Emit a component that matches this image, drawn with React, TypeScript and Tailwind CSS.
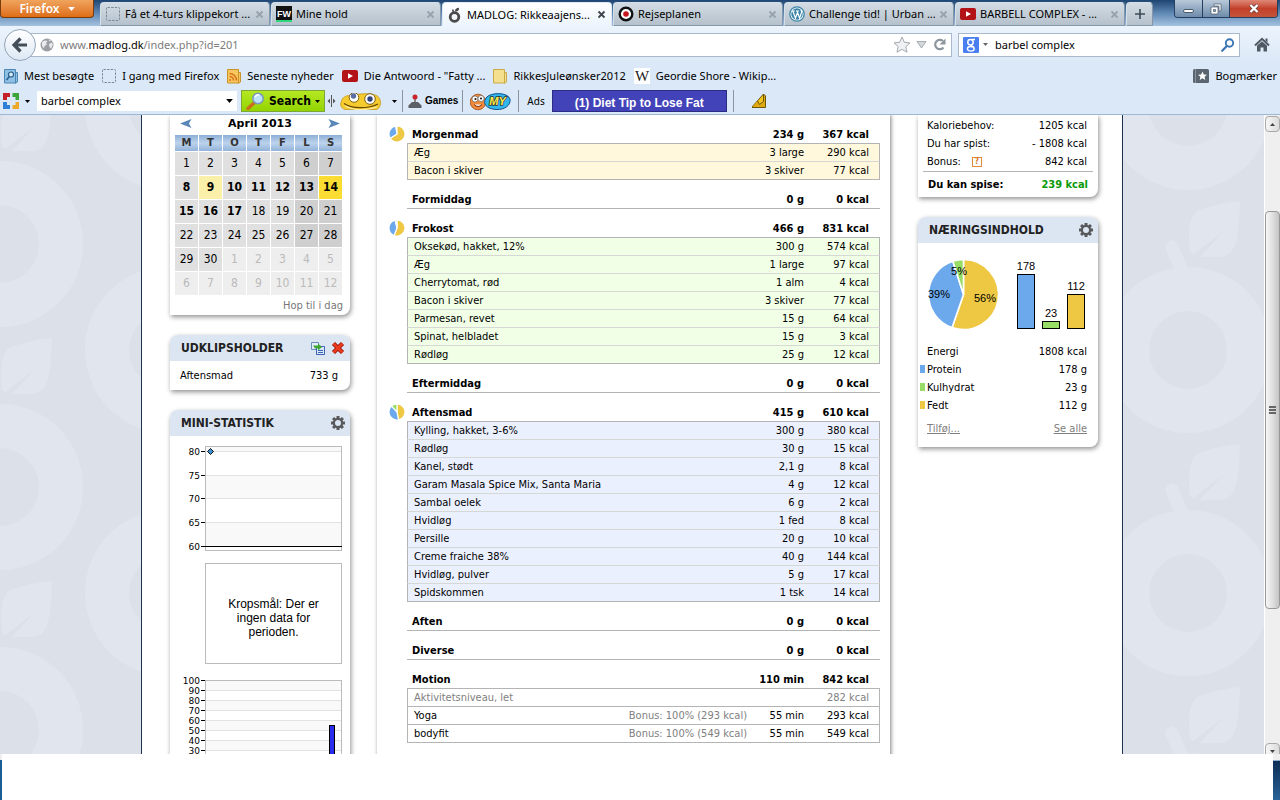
import type { ReactNode } from "react";

type Item = { name: string; amount: string; kcal: string; bonus?: string; muted?: boolean };
type Meal = { title: string; amount: string; kcal: string; tone: string; pie?: number; items: Item[] };

const row = (name: string, amount: string, kcal: string): Item => ({ name, amount, kcal });

const meals: Meal[] = [
  {
    title: "Morgenmad", amount: "234 g", kcal: "367 kcal", tone: "bg-[#fff8dc]", pie: 0.66,
    items: [row("Æg", "3 large", "290 kcal"), row("Bacon i skiver", "3 skiver", "77 kcal")],
  },
  { title: "Formiddag", amount: "0 g", kcal: "0 kcal", tone: "", items: [] },
  {
    title: "Frokost", amount: "466 g", kcal: "831 kcal", tone: "bg-[#f0ffe6]", pie: 0.56,
    items: [
      row("Oksekød, hakket, 12%", "300 g", "574 kcal"),
      row("Æg", "1 large", "97 kcal"),
      row("Cherrytomat, rød", "1 alm", "4 kcal"),
      row("Bacon i skiver", "3 skiver", "77 kcal"),
      row("Parmesan, revet", "15 g", "64 kcal"),
      row("Spinat, helbladet", "15 g", "3 kcal"),
      row("Rødløg", "25 g", "12 kcal"),
    ],
  },
  { title: "Eftermiddag", amount: "0 g", kcal: "0 kcal", tone: "", items: [] },
  {
    title: "Aftensmad", amount: "415 g", kcal: "610 kcal", tone: "bg-[#ebf0ff]", pie: 0.47,
    items: [
      row("Kylling, hakket, 3-6%", "300 g", "380 kcal"),
      row("Rødløg", "30 g", "15 kcal"),
      row("Kanel, stødt", "2,1 g", "8 kcal"),
      row("Garam Masala Spice Mix, Santa Maria", "4 g", "12 kcal"),
      row("Sambal oelek", "6 g", "2 kcal"),
      row("Hvidløg", "1 fed", "8 kcal"),
      row("Persille", "20 g", "10 kcal"),
      row("Creme fraiche 38%", "40 g", "144 kcal"),
      row("Hvidløg, pulver", "5 g", "17 kcal"),
      row("Spidskommen", "1 tsk", "14 kcal"),
    ],
  },
  { title: "Aften", amount: "0 g", kcal: "0 kcal", tone: "", items: [] },
  { title: "Diverse", amount: "0 g", kcal: "0 kcal", tone: "", items: [] },
  {
    title: "Motion", amount: "110 min", kcal: "842 kcal", tone: "bg-white",
    items: [
      { name: "Aktivitetsniveau, let", amount: "", kcal: "282 kcal", muted: true },
      { name: "Yoga", amount: "55 min", kcal: "293 kcal", bonus: "Bonus: 100% (293 kcal)" },
      { name: "bodyfit", amount: "55 min", kcal: "549 kcal", bonus: "Bonus: 100% (549 kcal)" },
    ],
  },
];

const weeks = [
  [1, 2, 3, 4, 5, 6, 7],
  [8, 9, 10, 11, 12, 13, 14],
  [15, 16, 17, 18, 19, 20, 21],
  [22, 23, 24, 25, 26, 27, 28],
  [29, 30, -1, -2, -3, -4, -5],
  [-6, -7, -8, -9, -10, -11, -12],
];

function dayClass(day: number, col: number) {
  if (day < 0) return "bg-[#eeeeee] text-[#bbbbbb]";
  if (day === 14) return "bg-[#fadc32] font-bold";
  if (day === 9) return "bg-[#fbf0aa] font-bold";
  const bg = col > 4 ? "bg-[#cfcfcf]" : "bg-[#e0e0e0]";
  return day >= 8 && day <= 17 ? `${bg} font-bold` : bg;
}

function point(cx: number, cy: number, r: number, t: number) {
  const a = t * Math.PI * 2;
  return `${cx + r * Math.sin(a)} ${cy - r * Math.cos(a)}`;
}

function Slice({ cx, cy, r, from, to, fill }: { cx: number; cy: number; r: number; from: number; to: number; fill: string }) {
  const large = to - from > 0.5 ? 1 : 0;
  return (
    <path
      d={`M${cx} ${cy} L${point(cx, cy, r, from)} A${r} ${r} 0 ${large} 1 ${point(cx, cy, r, to)} Z`}
      fill={fill}
      stroke="#fff"
      strokeWidth={r > 20 ? 1.6 : 1.2}
    />
  );
}

/* ---------- icons ---------- */

function DashedPage() {
  return (
    <svg width="14" height="14" viewBox="0 0 14 14">
      <rect x="0.5" y="0.5" width="13" height="13" rx="1" fill="none" stroke="#7b8794" strokeDasharray="2.4 1.2" />
    </svg>
  );
}

function YouTube() {
  return (
    <svg width="16" height="16" viewBox="0 0 16 16">
      <rect y="2" width="16" height="12" rx="2" fill="#b31217" />
      <path d="M6 5.2 11 8 6 10.8Z" fill="#fff" />
    </svg>
  );
}

function FwIcon() {
  return (
    <svg width="16" height="16" viewBox="0 0 16 16">
      <rect width="16" height="14" fill="#111" />
      <rect y="14" width="16" height="2" fill="#2fd67b" />
      <text x="8" y="11" fontSize="9" fontWeight="900" fill="#fff" textAnchor="middle" fontFamily="Liberation Sans">FW</text>
    </svg>
  );
}

function AppleRing() {
  return (
    <svg width="16" height="16" viewBox="0 0 16 16">
      <circle cx="7.5" cy="10" r="4.3" fill="none" stroke="#4a4a4a" strokeWidth="2.8" />
      <path d="M6.6 5.5 5.6 2.6" stroke="#4a4a4a" strokeWidth="1.6" />
      <path d="M8 4.5C7.8 2 9.5.8 12 .8 12.2 3.4 11 4.8 8 4.5Z" fill="#4a4a4a" />
    </svg>
  );
}

function Target() {
  return (
    <svg width="16" height="16" viewBox="0 0 16 16">
      <circle cx="8" cy="8" r="6.3" fill="#fff" stroke="#111" strokeWidth="2.4" />
      <circle cx="8" cy="8" r="2.8" fill="#c8171e" />
    </svg>
  );
}

function WordPress() {
  return (
    <svg width="16" height="16" viewBox="0 0 16 16">
      <circle cx="8" cy="8" r="7.2" fill="#f4f8fa" stroke="#3c85a8" strokeWidth="1.3" />
      <circle cx="8" cy="8" r="5.7" fill="#3c85a8" />
      <path d="M2.8 5h3M3.8 5 6.5 12 8.2 7.2M7 5h3M8 5l2.6 7 2-5.6c.3-1-.3-1.6-.8-2.2" fill="none" stroke="#fff" strokeWidth="1.2" />
    </svg>
  );
}

function Globe() {
  return (
    <svg width="14" height="14" viewBox="0 0 14 14">
      <circle cx="7" cy="7" r="6.5" fill="#9b9fa3" />
      <path d="M2 4 5 2.5 7.5 3 6 5 7 6.5 4.5 8 4 10.5 2 8ZM9 6l3-1.5.8 2.5-1.8 3.5L9.5 9ZM8.5 1.5l2.5 1-1.5 1Z" fill="#e9ebed" />
    </svg>
  );
}

function Gear() {
  const teeth = [0, 45, 90, 135, 180, 225, 270, 315];
  return (
    <svg width="14" height="14" viewBox="0 0 14 14">
      {teeth.map((a) => (
        <rect key={a} x="5.5" y="0" width="3" height="3.5" fill="#58595b" transform={`rotate(${a} 7 7)`} />
      ))}
      <circle cx="7" cy="7" r="4.1" fill="none" stroke="#58595b" strokeWidth="2.2" />
    </svg>
  );
}

function Magnifier({ color }: { color: string }) {
  return (
    <svg width="14" height="14" viewBox="0 0 14 14">
      <circle cx="8.5" cy="5" r="3.7" fill="none" stroke={color} strokeWidth="1.9" />
      <path d="M5.8 8 1.2 12.8" stroke={color} strokeWidth="2.2" strokeLinecap="round" />
    </svg>
  );
}

function Folder({ children, fill, stroke }: { children?: ReactNode; fill: string; stroke: string }) {
  return (
    <svg width="14" height="16" viewBox="0 0 14 16">
      <path d="M11 4.5h2.5v9.5l-2 1.2H11Z" fill={fill} stroke={stroke} />
      <path d="M.5 1.5h11v13.5H.5Z" fill={fill} stroke={stroke} />
      {children}
    </svg>
  );
}

function Caret({ className = "" }: { className?: string }) {
  return (
    <svg className={className} width="5" height="3" viewBox="0 0 5 3">
      <path d="M0 0h5L2.5 3Z" fill="currentColor" />
    </svg>
  );
}

/* ---------- browser window ---------- */

const tabs = [
  { title: "Få et 4-turs klippekort ...", icon: <DashedPage /> },
  { title: "Mine hold", icon: <FwIcon /> },
  { title: "MADLOG: Rikkeaajens...", icon: <AppleRing />, active: true },
  { title: "Rejseplanen", icon: <Target /> },
  { title: "Challenge tid! | Urban ...", icon: <WordPress /> },
  { title: "BARBELL COMPLEX - ...", icon: <YouTube /> },
];

function TabBar() {
  return (
    <div className="flex h-[26px] bg-linear-to-b from-[#1f4672] via-[#5f88b4] to-[#a5c2e0]">
      <button className="flex h-[18px] w-[94px] shrink-0 items-center justify-center gap-2 rounded-b border border-t-0 border-[#7a3c0c] bg-linear-to-b from-[#f0a45c] to-[#dd6d13] font-['Noto_Sans',sans-serif] text-xs font-semibold text-white">
        Firefox
        <Caret className="h-1 w-[7px]" />
      </button>
      <div className="ml-[6px] flex min-w-0 flex-1 gap-px pt-[2px]">
        {tabs.map((t) => (
          <div
            key={t.title}
            className={`flex w-[170px] min-w-0 items-center gap-1 rounded-t-sm border-t border-r border-l pr-[5px] pl-1 ${
              t.active
                ? "border-[#dfeaf6] bg-linear-to-b from-white to-[#ecf4fc]"
                : "border-b border-t-[#d5dfe8] border-r-[#8496a8] border-b-[#8496a8] border-l-[#d5dfe8] bg-linear-to-b from-[#d3dce4] to-[#b5c1cc]"
            }`}
          >
            <span className="flex w-4 shrink-0 justify-center">{t.icon}</span>
            <button className="min-w-0 flex-1 overflow-hidden text-left whitespace-nowrap">{t.title}</button>
            <button aria-label="Luk faneblad" className={t.active ? "text-[#3d444b]" : "text-[#97a2ad]"}>
              <svg width="9" height="9" viewBox="0 0 9 9">
                <path d="M1.5 1.5l6 6M7.5 1.5l-6 6" stroke="currentColor" strokeWidth="1.8" />
              </svg>
            </button>
          </div>
        ))}
        <button
          aria-label="Nyt faneblad"
          className="flex w-[27px] items-center justify-center rounded-t-sm border border-t-[#d5dfe8] border-r-[#8496a8] border-b-[#8496a8] border-l-[#d5dfe8] bg-linear-to-b from-[#d3dce4] to-[#b5c1cc]"
        >
          <svg width="10" height="10" viewBox="0 0 10 10">
            <path d="M5 0v10M0 5h10" stroke="#3d4a57" strokeWidth="1.6" />
          </svg>
        </button>
      </div>
      <div className="mr-[2px] flex h-[18px] shrink-0 overflow-hidden rounded-b border border-t-0 border-[#24405e] text-white">
        <button aria-label="Minimer" className="flex w-7 items-center justify-center border-r border-[#24405e] bg-linear-to-b from-[#b9c9da] to-[#6e8cab]">
          <span className="mt-1 h-1 w-[11px] rounded-sm border border-[#4a5a6b] bg-white" />
        </button>
        <button aria-label="Gendan" className="flex w-[27px] items-center justify-center border-r border-[#24405e] bg-linear-to-b from-[#b9c9da] to-[#6e8cab]">
          <svg width="12" height="12" viewBox="0 0 12 12">
            <path d="M4 1h7v7H9V3H4Z" fill="#fff" stroke="#4a5a6b" strokeWidth=".7" />
            <path d="M1 4h7v7H1ZM3.5 6.5v2h2v-2Z" fill="#fff" fillRule="evenodd" stroke="#4a5a6b" strokeWidth=".7" />
          </svg>
        </button>
        <button aria-label="Luk" className="flex w-[47px] items-center justify-center bg-linear-to-b from-[#dd8877] via-[#c4402a] to-[#c4533a]">
          <svg width="12" height="11" viewBox="0 0 12 11">
            <path d="M2.5 2l7 7M9.5 2l-7 7" stroke="#5a3a3a" strokeWidth="3.6" />
            <path d="M2.5 2l7 7M9.5 2l-7 7" stroke="#fff" strokeWidth="2.4" />
          </svg>
        </button>
      </div>
    </div>
  );
}

function NavBar() {
  return (
    <div className="flex h-[37px] items-center bg-linear-to-b from-[#ecf4fc] to-[#dbe8f7] pr-[10px] pl-1">
      <button aria-label="Tilbage" className="relative z-10 flex size-8 shrink-0 items-center justify-center rounded-full border border-[#94a4b8] bg-linear-to-b from-white to-[#dde8f4]">
        <svg width="16" height="16" viewBox="0 0 16 16">
          <path d="M8.5 1.5 2 8l6.5 6.5M2.5 8H15" fill="none" stroke="#444e59" strokeWidth="3.2" />
        </svg>
      </button>
      <div className="-ml-2 flex h-6 min-w-0 flex-1 items-center border border-[#a8b9cd] bg-white pr-1 pl-[11px]">
        <Globe />
        <div className="relative ml-[6px] flex-1">
          <span className="text-[#7c7c7c]">
            www.<span className="text-black">madlog.dk</span>/index.php?id=201
          </span>
          <input aria-label="Adresse" className="absolute inset-0 w-full bg-transparent outline-none" />
        </div>
        <button aria-label="Føj til bogmærker">
          <svg width="18" height="17" viewBox="0 0 18 17">
            <path d="M9 1l2.4 5.3 5.6.6-4.2 3.8 1.2 5.5L9 13.4l-5 2.8 1.2-5.5L1 6.9l5.6-.6Z" fill="#eef0f2" stroke="#a4aab0" />
          </svg>
        </button>
        <button aria-label="Historik" className="ml-[5px]">
          <svg width="11" height="8" viewBox="0 0 11 8">
            <path d="M1 .5h9L5.5 7Z" fill="#d5d9dd" stroke="#a4aab0" />
          </svg>
        </button>
        <button aria-label="Genindlæs" className="ml-[6px]">
          <svg width="14" height="13" viewBox="0 0 14 13">
            <path d="M10.5 9.5A4.7 4.7 0 1 1 10 3" fill="none" stroke="#8d969f" strokeWidth="2.2" />
            <path d="M12.5.5v6h-6Z" fill="#8d969f" />
          </svg>
        </button>
      </div>
      <div className="ml-[6px] flex h-6 w-[282px] shrink-0 items-center border border-[#a8b9cd] bg-white px-1">
        <svg width="16" height="16" viewBox="0 0 16 16">
          <rect width="16" height="16" rx="1" fill="#4a7ff0" />
          <circle cx="7.5" cy="5.2" r="2.7" fill="none" stroke="#fff" strokeWidth="1.5" />
          <ellipse cx="7.8" cy="11.8" rx="3.4" ry="2.3" fill="none" stroke="#fff" strokeWidth="1.4" />
          <path d="M8 8c.2 1 2 1 2.5 2M9 2.5h3" fill="none" stroke="#fff" strokeWidth="1.3" />
        </svg>
        <Caret className="ml-1 text-[#666]" />
        <input aria-label="Søg med Google" defaultValue="barbel complex" className="ml-[7px] min-w-0 flex-1 bg-transparent outline-none" />
        <button aria-label="Søg">
          <Magnifier color="#3a76b4" />
        </button>
      </div>
      <button aria-label="Startside" className="ml-[14px]">
        <svg width="16" height="15" viewBox="0 0 16 15">
          <path d="M1 8.5 8 1.8l7 6.7" fill="none" stroke="#4f5963" strokeWidth="2" />
          <path d="M11.5 1.5h2v4l-2-2Z" fill="#4f5963" />
          <path d="M3 8.7 8 4.2l5 4.5V14.5H9.5v-4h-3v4H3Z" fill="#4f5963" />
        </svg>
      </button>
    </div>
  );
}

const bookmarks = [
  {
    title: "Mest besøgte",
    icon: (
      <Folder fill="#8fc0e4" stroke="#4b86b4">
        <circle cx="7" cy="6.5" r="2.5" fill="#d7ebf8" stroke="#275f8d" strokeWidth="1.2" />
        <path d="M5.3 8.5 2.5 12" stroke="#275f8d" strokeWidth="1.5" />
      </Folder>
    ),
  },
  { title: "I gang med Firefox", icon: <DashedPage /> },
  {
    title: "Seneste nyheder",
    icon: (
      <Folder fill="#f7c65e" stroke="#c9932a">
        <path d="M2.5 8.5a4 4 0 0 1 4 4M2.5 5.5a7 7 0 0 1 7 7" fill="none" stroke="#d9741a" strokeWidth="1.6" />
        <circle cx="3.2" cy="12" r="1" fill="#d9741a" />
      </Folder>
    ),
  },
  { title: "Die Antwoord - \"Fatty ...", icon: <YouTube /> },
  { title: "RikkesJuleønsker2012", icon: <Folder fill="#f3df8d" stroke="#c9ac47" /> },
  {
    title: "Geordie Shore - Wikip...",
    icon: (
      <svg width="16" height="16" viewBox="0 0 16 16">
        <rect width="16" height="16" fill="#fff" />
        <text x="8" y="13" fontSize="15" fill="#222" textAnchor="middle" fontFamily="Liberation Serif">W</text>
      </svg>
    ),
  },
];

function BookmarksBar() {
  return (
    <div className="flex h-[25px] items-center bg-[#dae8f7] pr-[3px] pl-1 whitespace-nowrap">
      <div className="flex min-w-0 flex-1 items-center gap-2 overflow-hidden">
        {bookmarks.map((b) => (
          <a key={b.title} href="#" className="flex items-center gap-[6px]">
            <span className="flex shrink-0">{b.icon}</span>
            {b.title}
          </a>
        ))}
      </div>
      <button className="flex items-center gap-[6px]">
        <svg width="16" height="14" viewBox="0 0 16 14">
          <rect width="16" height="14" rx="1.5" fill="#5a6570" />
          <path d="M2.5 0v14" stroke="#87929c" />
          <path d="M9.5 2.5l1.3 2.9 3.2.3-2.4 2.1.7 3.1-2.8-1.6-2.8 1.6.7-3.1L5 5.7l3.2-.3Z" fill="#fff" />
        </svg>
        Bogmærker
      </button>
    </div>
  );
}

function Separator({ className = "" }: { className?: string }) {
  return <span className={`h-[22px] w-px shrink-0 bg-[#8b939c] ${className}`} />;
}

function Toolbar() {
  return (
    <div className="flex h-[27px] items-center border-b border-[#9fb7d3] bg-[#dae8f7] pl-[3px]">
      <button aria-label="Værktøjslinje" className="flex items-center">
        <svg width="17" height="16" viewBox="0 0 17 16">
          <path d="M0 0h7v4H4v3H0Z" fill="#c3202a" />
          <path d="M9.5 0H16v7h-3.5V4h-3Z" fill="#3ba53a" />
          <path d="M0 9h4v3h3v4H0Z" fill="#2f7fd6" />
          <path d="M12.5 9H16v7H9.5v-4h3Z" fill="#eda92c" />
        </svg>
        <Caret className="ml-[5px]" />
      </button>
      <div className="ml-[7px] flex h-5 w-[200px] shrink-0 items-center bg-white px-1">
        <input aria-label="Søgeord" defaultValue="barbel complex" className="min-w-0 flex-1 bg-transparent outline-none" />
        <button aria-label="Vis tidligere søgninger">
          <Caret className="h-1 w-[7px]" />
        </button>
      </div>
      <button className="ml-1 flex h-[22px] w-[84px] shrink-0 items-center justify-between border border-[#7da63a] bg-linear-to-b from-[#b5e820] to-[#93d400] px-1 font-['DejaVu_Sans_Condensed',sans-serif] text-xs font-bold">
        <svg width="19" height="18" viewBox="0 0 19 18">
          <path d="M9 10 2 16.5" stroke="#c96f1c" strokeWidth="3.5" strokeLinecap="round" />
          <circle cx="12" cy="6.5" r="5.2" fill="#bfe3fa" stroke="#7b9bb8" strokeWidth="1.6" />
          <path d="M9 5a3.5 3.5 0 0 1 4-2" fill="none" stroke="#fff" strokeWidth="1.5" />
        </svg>
        <span>Search</span>
        <Caret />
      </button>
      <svg className="ml-[2px] shrink-0" width="9" height="12" viewBox="0 0 9 12">
        <path d="M4.5 0v12" stroke="#555" />
        <path d="M3 3.5v5L.5 6ZM6 3.5v5L8.5 6Z" fill="#555" />
      </svg>
      <button aria-label="Smileys" className="ml-[4px] flex shrink-0 items-center">
        <svg width="42" height="17" viewBox="0 0 42 17">
          <path d="M1 9.5C2 4 6 2.500 10 2.500 22 0 34 0 38 3.500 42 8 41 14 37 16.500H5C1 15 0 12 1 9.500Z" fill="#f5cb2e" stroke="#c08f14" strokeWidth=".7" />
          <path d="M4 10.500C12 16 28 16 38 11" fill="none" stroke="#6b4a0a" strokeWidth="1.300" />
          <path d="M5 13C14 17.500 26 17.500 37 14" fill="none" stroke="#fdf0a0" strokeWidth="1.200" />
          <circle cx="14" cy="4.5" r="4.8" fill="#fff" stroke="#806010" />
          <circle cx="30" cy="6" r="5.3" fill="#fff" stroke="#806010" />
          <circle cx="13.5" cy="3" r="2.7" fill="#5a6ea5" />
          <circle cx="30" cy="6" r="2.700" fill="#2f4379" />
        </svg>
        <Caret className="ml-[10px]" />
      </button>
      <Separator className="ml-[5px]" />
      <button className="ml-[5px] flex items-center gap-[3px] font-['Liberation_Sans',sans-serif] text-[10px] font-semibold">
        <svg width="14" height="15" viewBox="0 0 14 15">
          <path d="M7 4v7" stroke="#888" strokeWidth="2" />
          <circle cx="7" cy="3" r="2.5" fill="#c9252b" />
          <path d="M4 8h6l3.5 3.5V14H.5v-2.5Z" fill="#5c6066" />
        </svg>
        Games
      </button>
      <Separator className="ml-1" />
      <button aria-label="My" className="ml-[7px] shrink-0">
        <svg width="41" height="19" viewBox="0 0 41 19">
          <circle cx="8" cy="10" r="7.8" fill="#ef8a3c" stroke="#a34a12" strokeWidth=".8" />
          <circle cx="5" cy="7" r="3" fill="#fff" stroke="#555" strokeWidth=".6" />
          <circle cx="11" cy="6.5" r="3" fill="#fff" stroke="#555" strokeWidth=".6" />
          <circle cx="5.5" cy="7" r="1.1" fill="#222" />
          <circle cx="11" cy="6.5" r="1.1" fill="#222" />
          <path d="M4 12.5q4 4 8 0" fill="#fff" stroke="#7a2b0a" />
          <path d="M16 6C20 0 38 0 40 7c1 6-5 11-14 10.5C17 17 12 12 16 6Z" fill="#2fb7ee" stroke="#14548d" />
          <text x="27.5" y="13" fontSize="11" fontWeight="bold" fontStyle="italic" fill="#ffee4a" stroke="#333" strokeWidth="1.5" paintOrder="stroke" textAnchor="middle" fontFamily="Liberation Sans">MY</text>
        </svg>
      </button>
      <Separator className="ml-[7px]" />
      <span className="ml-2 text-[10px]">Ads</span>
      <a href="#" className="ml-[7px] flex h-[22px] w-[175px] shrink-0 items-end justify-center border border-[#2c2c82] bg-[#4343b9] font-['Liberation_Sans',sans-serif] text-xs leading-4 font-bold text-white">
        (1) Diet Tip to Lose Fat
      </a>
      <Separator className="ml-[6px]" />
      <button aria-label="Fremhæv" className="ml-[17px]">
        <svg width="17" height="16" viewBox="0 0 17 16">
          <path d="M1 14 12.500 1v7.500L8.500 13Z" fill="#f3c51d" stroke="#6d5708" strokeLinejoin="round" />
          <path d="M1 14.500H14.500V3L12.500 1v7.500L8.500 11.500 6.500 8" fill="#e0a90f" stroke="#6d5708" strokeLinejoin="round" />
        </svg>
      </button>
    </div>
  );
}

/* ---------- page ---------- */

function Fruit({ x, y }: { x: number; y: number }) {
  return (
    <g transform={`translate(${x} ${y})`}>
      <path d="M-16-103-2-70" stroke="#e1e6ee" strokeWidth="13" strokeLinecap="round" />
      <path d="M2-98C-1-125 4-139 14-141Q32-147 52-149C50-110 49-93 30-93H12L36-119 5-95Z" fill="#e1e6ee" />
      <circle r="61" fill="none" stroke="#e1e6ee" strokeWidth="44" />
    </g>
  );
}

function Backdrop() {
  return (
    <svg className="absolute inset-0 size-full" aria-hidden="true">
      <pattern id="fruits" width="340" height="243" patternUnits="userSpaceOnUse">
        {[0, 340].map((x) => [129, 372].map((y) => <Fruit key={`${x}-${y}`} x={x} y={y} />))}
        {[-8, 235].map((y) => <Fruit key={y} x={168} y={y} />)}
      </pattern>
      <rect width="100%" height="100%" fill="#dce1e9" />
      <rect width="100%" height="100%" fill="url(#fruits)" />
    </svg>
  );
}

function Card({ title, tools, top, children }: { title?: string; tools?: ReactNode; top?: boolean; children: ReactNode }) {
  return (
    <section className={`rounded-br-lg bg-white shadow-[1px_2px_5px_#00000070] ${top ? "" : "rounded-t-lg"}`}>
      {title && (
        <header className="flex h-[26px] items-center justify-between rounded-t-lg bg-[#dce6f2] pr-[5px] pl-[11px]">
          <h2 className="text-xs font-bold text-[#222]">{title}</h2>
          <div className="flex items-center gap-[6px]">{tools}</div>
        </header>
      )}
      {children}
    </section>
  );
}

function SettingsButton() {
  return (
    <button aria-label="Indstillinger">
      <Gear />
    </button>
  );
}

function Calendar() {
  return (
    <Card top>
      <div className="flex h-5 items-start justify-between px-[10px]">
        <button aria-label="Forrige måned">
          <svg width="12" height="17" viewBox="0 0 12 17">
            <path d="M0 8.5 11.5 4 9 8.5l2.5 4.5Z" fill="#5b86b8" />
          </svg>
        </button>
        <h2 className="font-['DejaVu_Sans',sans-serif] text-[11px] leading-[17px] font-bold">April 2013</h2>
        <button aria-label="Næste måned">
          <svg width="12" height="17" viewBox="0 0 12 17">
            <path d="M12 8.5.5 4 3 8.5.5 13Z" fill="#5b86b8" />
          </svg>
        </button>
      </div>
      <table className="ml-[5px] table-fixed border-separate border-spacing-0 text-center font-['DejaVu_Sans_Condensed',sans-serif] text-xs">
        <thead>
          <tr>
            {["M", "T", "O", "T", "F", "L", "S"].map((d, i) => (
              <th key={i} className="h-[17px] w-6 border-r border-b border-white bg-linear-to-b from-[#8caed6] via-[#bdd3ec] to-[#93b3da] p-0 font-['DejaVu_Sans',sans-serif] text-[10px] leading-4 text-[#333]">
                {d}
              </th>
            ))}
          </tr>
        </thead>
        <tbody>
          {weeks.map((w) => (
            <tr key={w[0]}>
              {w.map((d, i) => (
                <td key={d} className={`h-6 border-r border-b border-white p-0 leading-[23px] ${dayClass(d, i)}`}>
                  {Math.abs(d)}
                </td>
              ))}
            </tr>
          ))}
        </tbody>
      </table>
      <div className="px-[7px] text-right leading-[19px]">
        <a href="#" className="text-[#777]">Hop til i dag</a>
      </div>
    </Card>
  );
}

function Clipboard() {
  return (
    <Card
      title="UDKLIPSHOLDER"
      tools={
        <>
          <button aria-label="Indsæt">
            <svg width="14" height="14" viewBox="0 0 14 14">
              <path d="M.5 1.5h7v7h-7Z" fill="#e4eefb" stroke="#6a8bbd" />
              <path d="M5.5 5.5h8v8h-8Z" fill="#dbe8fb" stroke="#3b64b5" />
              <path d="M7 9.5h5M7 11.5h5" stroke="#3b64b5" />
              <path d="M2 4.5h5V2.5L11 6 7 9.5v-2H4Z" fill="#3fa535" />
            </svg>
          </button>
          <button aria-label="Slet">
            <svg width="14" height="14" viewBox="0 0 14 14">
              <path d="M2.5 2.5l9 9M11.5 2.5l-9 9" stroke="#8f1507" strokeWidth="4.4" />
              <path d="M2.5 2.5l9 9M11.5 2.5l-9 9" stroke="#ee3a20" strokeWidth="2.6" />
            </svg>
          </button>
        </>
      }
    >
      <div className="flex h-[29px] items-center justify-between pt-[2px] pr-3 pl-[10px]">
        <span>Aftensmad</span>
        <span>733 g</span>
      </div>
    </Card>
  );
}

function AxisLabel({ y, value }: { y: number; value: number }) {
  return (
    <>
      <text x="30" y={y + 4} fontSize="9" textAnchor="end" fontFamily="DejaVu Sans">{value}</text>
      <path d={`M31 ${y + 0.5}h4`} stroke="#000" />
    </>
  );
}

function MiniStats() {
  return (
    <Card title="MINI-STATISTIK" tools={<SettingsButton />}>
      <div className="flex flex-col items-start pt-[10px]">
        <svg width="180" height="106" viewBox="0 0 180 106">
          <rect x="35.5" y=".5" width="136" height="104" fill="#fff" stroke="#bbb" />
          <path d="M36 1h135v4H36ZM36 29h135v23H36ZM36 76h135v24H36Z" fill="#f9f9f9" />
          <path d="M36 5.5h135M36 29.5h135M36 52.5h135M36 76.5h135" stroke="#e2e2e2" />
          {[5, 29, 52, 76, 100].map((y, i) => <AxisLabel key={y} y={y} value={80 - i * 5} />)}
          <path d="M31 100.5h141" stroke="#000" />
          <path d="M40.5 2.5l3 3-3 3-3-3Z" fill="#3c8fd0" stroke="#000" strokeWidth=".9" />
        </svg>
        <div className="mt-[11px] ml-[35px] flex h-[101px] w-[137px] items-center justify-center border border-[#bbb] px-4 pt-2 text-center font-['Liberation_Sans',sans-serif] text-xs leading-[14px]">
          <p>Kropsmål: Der er ingen data for perioden.</p>
        </div>
        <svg className="mt-[12px]" width="180" height="110" viewBox="0 0 180 110">
          <rect x="35.5" y="4.5" width="136" height="100" fill="#fff" stroke="#bbb" />
          {[0, 1, 2, 3, 4, 5, 6, 7].map((i) => (
            <g key={i}>
              {i % 2 === 0 && <rect x="36" y={5 + i * 10} width="135" height="10" fill="#f9f9f9" />}
              {i > 0 && <path d={`M36 ${4.5 + i * 10}h135`} stroke="#e2e2e2" />}
              <AxisLabel y={4 + i * 10} value={100 - i * 10} />
            </g>
          ))}
          <rect x="159.5" y="49.5" width="5" height="55" fill="#2b2bf0" stroke="#000" />
        </svg>
      </div>
    </Card>
  );
}

function MealSection({ meal }: { meal: Meal }) {
  return (
    <div className="flex pt-[11px]">
      <div className="w-[18px] shrink-0">
        {meal.pie && (
          <svg width="16" height="16" viewBox="0 0 16 16">
            <Slice cx={8} cy={8} r={8} from={0} to={meal.pie} fill="#eec843" />
            <Slice cx={8} cy={8} r={8} from={meal.pie} to={0.97} fill="#6ca8ec" />
            {meal.title !== "Morgenmad" && <Slice cx={8} cy={8} r={8} from={meal.title === "Aftensmad" ? 0.88 : 0.96} to={1} fill="#98dd66" />}
          </svg>
        )}
      </div>
      <table className="w-full table-fixed border-separate border-spacing-0 text-right">
        <colgroup>
          <col />
          <col className="w-[140px]" />
          <col className="w-[57px]" />
          <col className="w-[76px]" />
        </colgroup>
        <thead>
          <tr>
            <th className="h-[18px] border-b border-[#b4b4b4] p-0 pl-[5px] text-left leading-[17px]">{meal.title}</th>
            <th className="border-b border-[#b4b4b4] p-0" />
            <th className="border-b border-[#b4b4b4] p-0 leading-[17px] whitespace-nowrap">{meal.amount}</th>
            <th className="border-b border-[#b4b4b4] p-0 pr-[11px] leading-[17px]">{meal.kcal}</th>
          </tr>
        </thead>
        <tbody>
          {meal.items.map((it, i) => {
            const line = i === meal.items.length - 1 || meal.title === "Motion" ? "border-b-[#b4b4b4]" : "border-b-[#d6d8d6]";
            const cell = `border-b border-x-[#b4b4b4] p-0 leading-[17px] whitespace-nowrap ${line}`;
            return (
              <tr key={it.name} className={`${meal.tone} ${it.muted ? "text-[#808080]" : ""}`}>
                <td className={`${cell} h-[18px] border-l pl-[6px] text-left`}>{it.name}</td>
                <td className={`${cell} text-[#808080]`}>{it.bonus}</td>
                <td className={cell}>{it.amount}</td>
                <td className={`${cell} border-r pr-[10px]`}>{it.kcal}</td>
              </tr>
            );
          })}
        </tbody>
      </table>
    </div>
  );
}

function EnergyCard() {
  return (
    <Card top>
      <dl className="px-[5px] pt-[2px] pb-[3px] leading-[18px]">
        <div className="flex justify-between pr-[6px] pl-1">
          <dt>Kaloriebehov:</dt>
          <dd>1205 kcal</dd>
        </div>
        <div className="flex justify-between pr-[6px] pl-1">
          <dt>Du har spist:</dt>
          <dd>- 1808 kcal</dd>
        </div>
        <div className="flex justify-between border-b border-[#b4b4b4] pr-[6px] pl-1">
          <dt className="flex items-center gap-[11px]">
            Bonus:
            <button aria-label="Hjælp" className="flex size-[10px] items-center justify-center border border-[#e08a3c] text-[8px] font-bold text-[#d97a28]">
              ?
            </button>
          </dt>
          <dd>842 kcal</dd>
        </div>
        <div className="flex justify-between px-[5px] pt-1 font-bold">
          <dt>Du kan spise:</dt>
          <dd className="text-[#0a9a0a]">239 kcal</dd>
        </div>
      </dl>
    </Card>
  );
}

function NutritionCard() {
  const rows = [
    { label: "Energi", value: "1808 kcal", swatch: "bg-white" },
    { label: "Protein", value: "178 g", swatch: "bg-[#6ca8ec]" },
    { label: "Kulhydrat", value: "23 g", swatch: "bg-[#98dd66]" },
    { label: "Fedt", value: "112 g", swatch: "bg-[#eec843]" },
  ];
  return (
    <Card title="NÆRINGSINDHOLD" tools={<SettingsButton />}>
      <svg width="180" height="100" viewBox="0 0 180 100" fontSize="11" fontFamily="Liberation Sans" textAnchor="middle">
        <Slice cx={45.5} cy={51.5} r={35} from={0} to={0.553} fill="#eec843" />
        <Slice cx={45.5} cy={51.5} r={35} from={0.553} to={0.951} fill="#6ca8ec" />
        <Slice cx={45.5} cy={51.5} r={35} from={0.951} to={1} fill="#98dd66" />
        <text x="67" y="59">56%</text>
        <text x="21" y="55">39%</text>
        <text x="41" y="32">5%</text>
        <rect x="99.5" y="31.5" width="17" height="54" fill="#6ca8ec" stroke="#000" />
        <rect x="124.5" y="78.5" width="17" height="7" fill="#98dd66" stroke="#000" />
        <rect x="149.5" y="51.5" width="17" height="34" fill="#eec843" stroke="#000" />
        <text x="108" y="27">178</text>
        <text x="133" y="74">23</text>
        <text x="158" y="47">112</text>
      </svg>
      <dl className="leading-[18px]">
        {rows.map((r) => (
          <div key={r.label} className="flex pr-[11px] pl-[2px]">
            <span className={`mt-[4px] mr-[2px] h-[8px] w-[5px] ${r.swatch}`} />
            <dt className="flex-1">{r.label}</dt>
            <dd>{r.value}</dd>
          </div>
        ))}
      </dl>
      <div className="flex justify-between pt-[5px] pr-[11px] pb-[9px] pl-[9px] leading-[18px] text-[#808080] underline">
        <a href="#">Tilføj...</a>
        <a href="#">Se alle</a>
      </div>
    </Card>
  );
}

function Scrollbar() {
  return (
    <div className="flex w-4 shrink-0 flex-col border-l border-white bg-[#efefef] pt-px" aria-hidden="true">
      <span className="flex h-4 items-center justify-center rounded-sm border border-[#a9a9a9] bg-linear-to-r from-[#f6f6f6] to-[#dcdcdc]">
        <Caret className="rotate-180 text-[#444]" />
      </span>
      <span className="h-[79px]" />
      <span className="flex h-[398px] flex-col items-center justify-center gap-px rounded-sm border border-[#989898] bg-linear-to-r from-[#f6f6f6] via-[#e0e0e0] to-[#c4c4c4]">
        <span className="h-[2px] w-[7px] bg-[#666]" />
        <span className="h-[2px] w-[7px] bg-[#666]" />
        <span className="h-[2px] w-[7px] bg-[#666]" />
      </span>
      <span className="flex-1" />
      <span className="-mb-[5px] flex h-4 items-center justify-center rounded-sm border border-[#a9a9a9] bg-linear-to-r from-[#f6f6f6] to-[#dcdcdc]">
        <Caret className="text-[#444]" />
      </span>
    </div>
  );
}

export default function App() {
  return (
    <div className="flex h-screen flex-col overflow-hidden bg-white text-black">
      <div className="shrink-0 font-['Noto_Sans','Open_Sans',sans-serif] text-[11px] leading-4">
        <TabBar />
        <NavBar />
        <BookmarksBar />
        <Toolbar />
      </div>

      <div className="flex min-h-0 flex-1 font-['DejaVu_Sans_Condensed','DejaVu_Sans',sans-serif] text-[11px]">
        <div className="relative min-w-0 flex-1 overflow-hidden">
          <Backdrop />
          <div className="relative mx-auto flex min-h-full max-w-[982px] items-stretch border-x border-[#1d3450] bg-white pr-6 pl-7">
            <aside className="flex w-[180px] shrink-0 flex-col gap-5">
              <Calendar />
              <Clipboard />
              <MiniStats />
            </aside>
            <main className="mr-7 ml-[27px] min-w-0 flex-1 pr-[10px] pl-3 shadow-[1px_0_4px_#00000080]">
              {meals.map((m) => <MealSection key={m.title} meal={m} />)}
            </main>
            <aside className="flex w-[180px] shrink-0 flex-col gap-5">
              <EnergyCard />
              <NutritionCard />
            </aside>
          </div>
        </div>
        <Scrollbar />
      </div>

      <div className="flex h-[46px] shrink-0 justify-between bg-[#efefef]">
        <span className="mt-[6px] w-[2px] bg-[#1b5e96]" />
        <span className="flex-1 bg-white" />
        <span className="mt-[6px] w-[7px] border-t border-[#8fb0cc] bg-linear-to-b from-[#0e2f57] to-[#2a6398]" />
      </div>
    </div>
  );
}
